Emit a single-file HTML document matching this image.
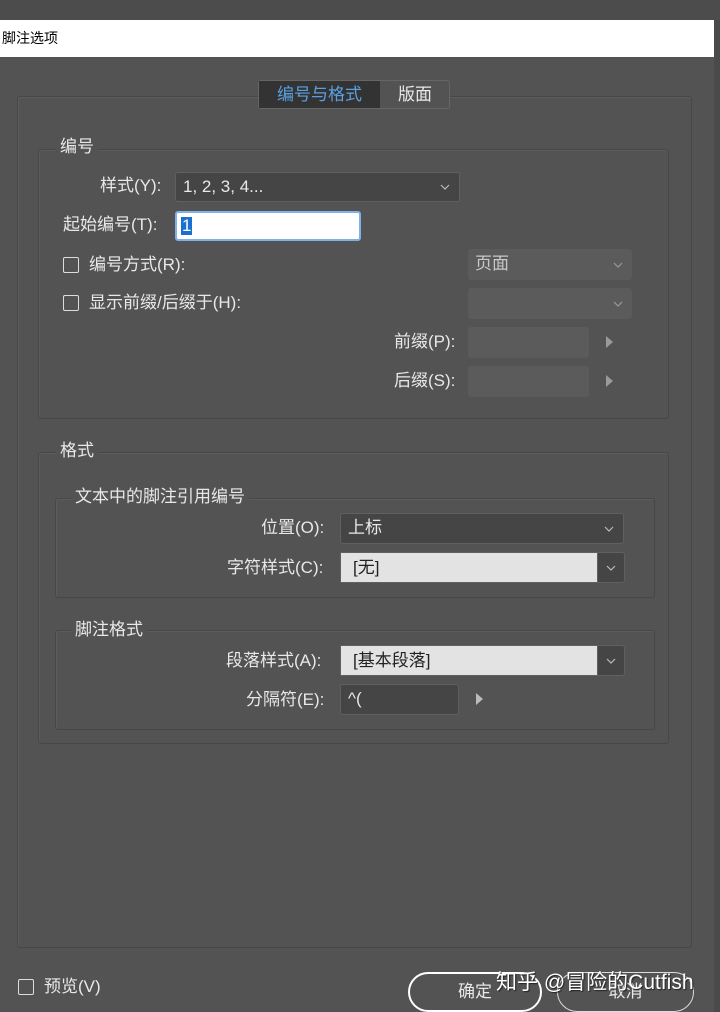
<!DOCTYPE html>
<html><head><meta charset="utf-8"><style>
*{margin:0;padding:0;box-sizing:border-box}
body{width:720px;height:1012px;background:#535353;position:relative;overflow:hidden;font-family:"Liberation Sans","Noto Sans CJK SC",sans-serif;color:#e8e8e8;font-size:17px}
.a{position:absolute;white-space:nowrap}
.grp{position:absolute;border:1px solid #474747;border-radius:3px;box-shadow:1px 1px 0 #5c5c5c inset}
.lbl{position:absolute;background:#535353;padding:0 4px;line-height:20px}
.dd{position:absolute;background:#454545;border:1px solid #606060;border-radius:3px;line-height:28px;padding-left:7px}
.dis{position:absolute;background:#5b5b5b;border-radius:3px;color:#c8c8c8;line-height:30px;padding-left:7px}
.chev{position:absolute;right:9px;top:50%;margin-top:-3px;width:10px;height:6px}
.light{position:absolute;background:#e3e3e3;color:#222;line-height:30px;padding-left:12px;border:1px solid #606060}
.lbtn{position:absolute;background:#454545;border:1px solid #606060;border-radius:0 3px 3px 0;width:28px}
.lbtn .chev{right:8px}
.cb{position:absolute;width:16px;height:16px;border:1.5px solid #ddd;border-radius:2px}
.tri{position:absolute;width:0;height:0;border-left:7px solid #9a9a9a;border-top:6px solid transparent;border-bottom:6px solid transparent}
</style></head><body>
<svg width="0" height="0" style="position:absolute"><defs><symbol id="cv" viewBox="0 0 10 6"><path d="M1 1L5 5L9 1" fill="none" stroke="currentColor" stroke-width="1.2"/></symbol></defs></svg>
<div class="a" style="left:0;top:0;width:720px;height:20px;background:#4c4c4c"></div>
<div class="a" style="left:0;top:20px;width:714px;height:37px;background:#fff;color:#000;font-size:14px;line-height:37px;padding-left:2px">脚注选项</div>
<div class="a" style="left:714px;top:20px;width:6px;height:992px;background:#4a4a4a"></div>

<div class="grp" style="left:17px;top:96px;width:675px;height:852px"></div>
<div class="a" style="left:258px;top:80px;width:192px;height:29px;border:1px solid #666;border-radius:3px;background:#535353"></div>
<div class="a" style="left:259px;top:81px;width:121px;height:27px;background:#333;color:#5aa0e0;text-align:center;line-height:27px">编号与格式</div>
<div class="a" style="left:381px;top:81px;width:68px;height:27px;text-align:center;line-height:27px">版面</div>

<div class="grp" style="left:38px;top:149px;width:631px;height:270px"></div>
<div class="lbl" style="left:56px;top:137px">编号</div>
<div class="a" style="left:100px;top:176px;line-height:20px">样式(Y):</div>
<div class="dd" style="left:175px;top:172px;width:285px;height:30px">1, 2, 3, 4...<svg class="chev" style="color:#bbb"><use href="#cv"/></svg></div>
<div class="a" style="left:63px;top:215px;line-height:20px">起始编号(T):</div>
<div class="a" style="left:175px;top:211px;width:186px;height:30px;background:#fff;border:2px solid #7fb0ea;border-radius:3px"><span style="position:absolute;left:4px;top:4px;background:#1a6fcf;color:#fff;line-height:18px;padding:0 1px">1</span></div>
<div class="cb" style="left:63px;top:257px"></div>
<div class="a" style="left:89px;top:255px;line-height:20px">编号方式(R):</div>
<div class="dis" style="left:468px;top:249px;width:164px;height:31px">页面<svg class="chev" style="color:#999"><use href="#cv"/></svg></div>
<div class="cb" style="left:63px;top:295px"></div>
<div class="a" style="left:89px;top:293px;line-height:20px">显示前缀/后缀于(H):</div>
<div class="dis" style="left:468px;top:288px;width:164px;height:31px"><svg class="chev" style="color:#999"><use href="#cv"/></svg></div>
<div class="a" style="left:394px;top:332px;line-height:20px">前缀(P):</div>
<div class="dis" style="left:468px;top:327px;width:121px;height:31px"></div>
<div class="tri" style="left:606px;top:336px"></div>
<div class="a" style="left:394px;top:371px;line-height:20px">后缀(S):</div>
<div class="dis" style="left:468px;top:366px;width:121px;height:31px"></div>
<div class="tri" style="left:606px;top:375px"></div>

<div class="grp" style="left:38px;top:452px;width:631px;height:292px"></div>
<div class="lbl" style="left:56px;top:441px">格式</div>
<div class="grp" style="left:55px;top:498px;width:600px;height:100px"></div>
<div class="lbl" style="left:71px;top:487px">文本中的脚注引用编号</div>
<div class="a" style="left:261px;top:518px;line-height:20px">位置(O):</div>
<div class="dd" style="left:340px;top:513px;width:284px;height:31px">上标<svg class="chev" style="color:#bbb"><use href="#cv"/></svg></div>
<div class="a" style="left:227px;top:558px;line-height:20px">字符样式(C):</div>
<div class="light" style="left:340px;top:552px;width:258px;height:31px">[无]</div>
<div class="lbtn" style="left:597px;top:552px;height:31px"><svg class="chev" style="color:#bbb"><use href="#cv"/></svg></div>

<div class="grp" style="left:55px;top:630px;width:600px;height:100px"></div>
<div class="lbl" style="left:71px;top:620px">脚注格式</div>
<div class="a" style="left:226px;top:651px;line-height:20px">段落样式(A):</div>
<div class="light" style="left:340px;top:645px;width:258px;height:31px">[基本段落]</div>
<div class="lbtn" style="left:597px;top:645px;height:31px"><svg class="chev" style="color:#bbb"><use href="#cv"/></svg></div>
<div class="a" style="left:246px;top:690px;line-height:20px">分隔符(E):</div>
<div class="dd" style="left:340px;top:684px;width:119px;height:31px">^(</div>
<div class="tri" style="left:476px;top:693px;border-left-color:#bbb"></div>

<div class="cb" style="left:18px;top:979px"></div>
<div class="a" style="left:44px;top:977px;line-height:20px">预览(V)</div>
<div class="a" style="left:408px;top:972px;width:134px;height:40px;border:2.5px solid #fff;border-radius:20px;text-align:center;line-height:36px">确定</div>
<div class="a" style="left:557px;top:972px;width:137px;height:40px;border:1px solid #ddd;border-radius:20px;text-align:center;line-height:38px">取消</div>
<div class="a" style="left:496px;top:966px;font-size:21px;color:#fff;text-shadow:1px 1px 1px #222">知乎 @冒险的Cutfish</div>
</body></html>
